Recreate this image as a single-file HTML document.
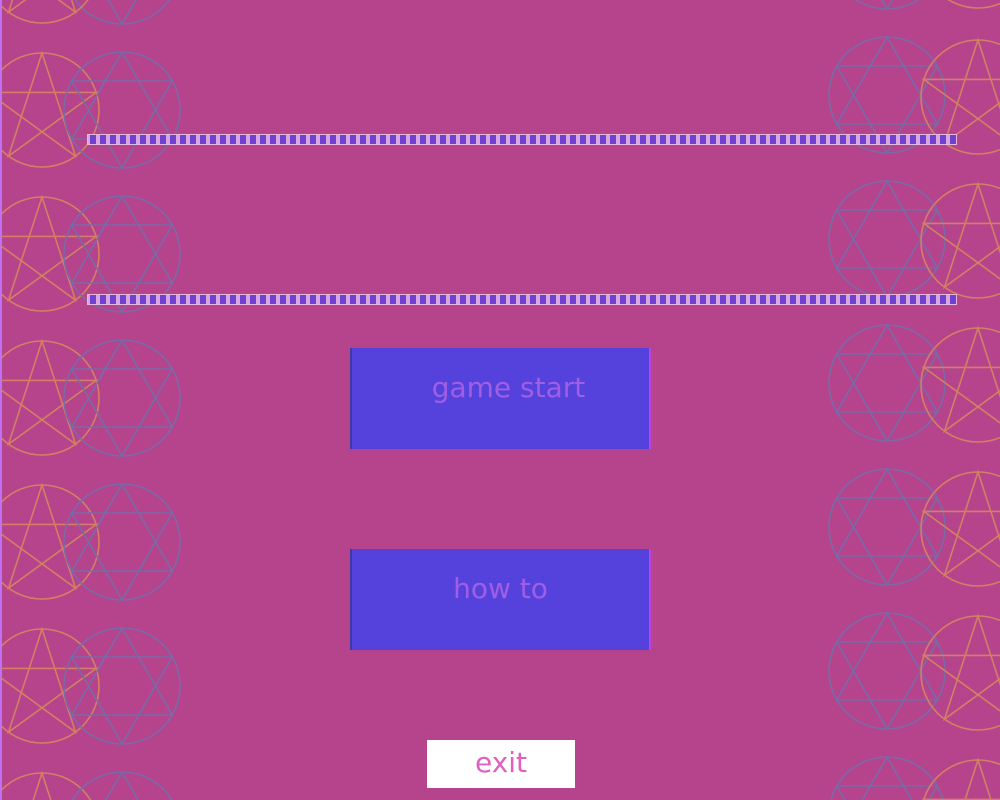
<!DOCTYPE html>
<html><head><style>
html,body{margin:0;padding:0;width:1000px;height:800px;overflow:hidden;background:#b5448c;font-family:"DejaVu Sans","Liberation Sans",sans-serif}
.bar{position:absolute;left:87px;width:868px;height:9px;border:1px solid #e8b8dc;background:repeating-linear-gradient(90deg,#d9a8e0 0 2px,#7040d0 2px 8px,#d9a8e0 8px 10px)}
.btn{position:absolute;left:350px;width:301px;height:101px;background:#5542dd;color:#9f5ee4;font-size:28px;text-align:center;border-left:2px solid #3d3aa8;border-right:2px solid #c040e0;box-sizing:border-box}
.exit{position:absolute;left:427px;top:740px;width:148px;height:48px;background:#fff;color:#e060c0;font-size:28px;text-align:center;line-height:46px}
svg{display:block}
</style></head><body>
<svg width="1000" height="800" style="position:absolute;left:0;top:0;overflow:hidden">
<defs>
<g id="pent" fill="none" stroke="#d47f63" stroke-width="1.6">
<circle r="57"/>
<polygon points="0,-57 33.5,46.1 -54.2,-17.6 54.2,-17.6 -33.5,46.1"/>
</g>
<g id="hex" fill="none" stroke="#7a6aa8" stroke-width="1.6">
<circle r="58"/>
<polygon points="0,-58 50.2,29 -50.2,29"/>
<polygon points="0,58 50.2,-29 -50.2,-29"/>
</g>
</defs>
<g>
<use href="#hex" x="122" y="-34"/><use href="#pent" x="42" y="-34"/>
<use href="#pent" x="42" y="110"/><use href="#hex" x="122" y="110"/>
<use href="#pent" x="42" y="254"/><use href="#hex" x="122" y="254"/>
<use href="#pent" x="42" y="398"/><use href="#hex" x="122" y="398"/>
<use href="#pent" x="42" y="542"/><use href="#hex" x="122" y="542"/>
<use href="#pent" x="42" y="686"/><use href="#hex" x="122" y="686"/>
<use href="#pent" x="42" y="830"/><use href="#hex" x="122" y="830"/>
<use href="#hex" x="887" y="-49"/><use href="#pent" x="978" y="-49"/>
<use href="#hex" x="887" y="95"/><use href="#pent" x="978" y="97"/>
<use href="#hex" x="887" y="239"/><use href="#pent" x="978" y="241"/>
<use href="#hex" x="887" y="383"/><use href="#pent" x="978" y="385"/>
<use href="#hex" x="887" y="527"/><use href="#pent" x="978" y="529"/>
<use href="#hex" x="887" y="671"/><use href="#pent" x="978" y="673"/>
<use href="#hex" x="887" y="815"/><use href="#pent" x="978" y="817"/>
</g>
<rect x="0" y="0" width="2" height="800" fill="#c070f0"/>
</svg>
<div class="bar" style="top:134px"></div>
<div class="bar" style="top:294px"></div>
<div class="btn" style="top:348px;line-height:80px;padding-left:16px">game start</div>
<div class="btn" style="top:549px;line-height:80px">how to</div>
<div class="exit">exit</div>
</body></html>
